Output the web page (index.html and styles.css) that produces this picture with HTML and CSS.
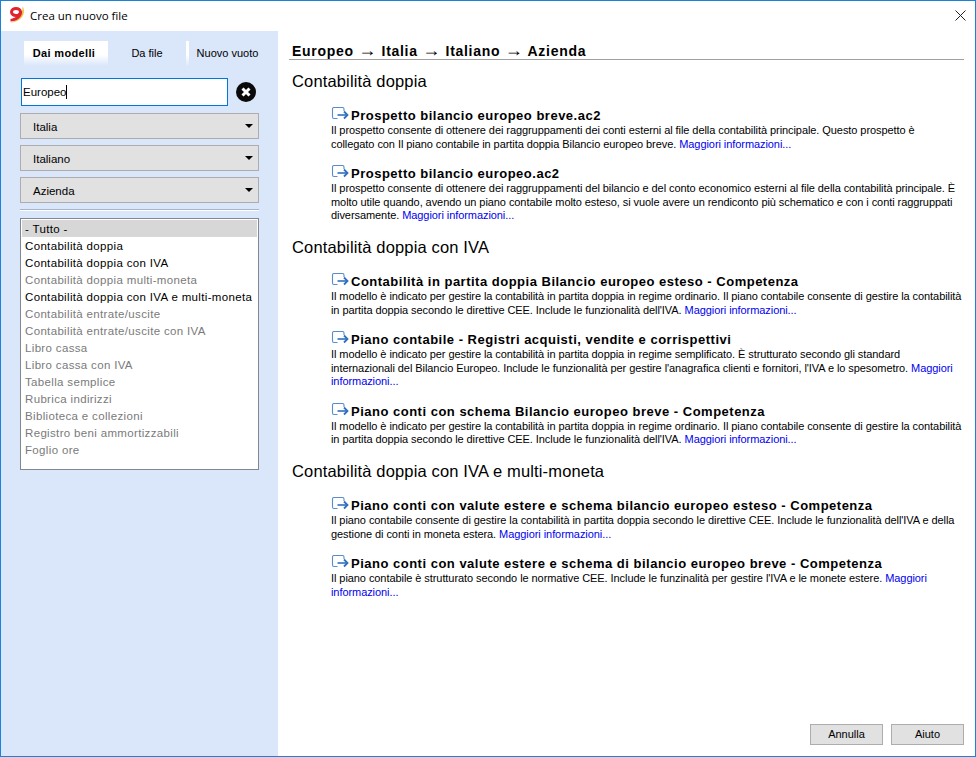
FILE: index.html
```html
<!DOCTYPE html>
<html lang="it">
<head>
    <meta charset="UTF-8">
    <title>Crea un nuovo file</title>
    <link rel="stylesheet" href="styles.css">
</head>
<body>
    <svg class="sprites" width="0" height="0">
        <symbol id="go" viewBox="0 0 19 15">
            <path d="M13 4V2a1.500 1.500 0 0 0-1.500-1.500H3A1.500 1.500 0 0 0 1.500 2v8A1.500 1.500 0 0 0 3 11.500h3.500" fill="none" stroke="#5a8cca" stroke-width="1.100"/>
            <path d="M6.500 8h9.500" fill="none" stroke="#2f6fbd" stroke-width="1.600"/>
            <path d="M13 4.500l3.500 3.500-3.500 3.500" fill="none" stroke="#2f6fbd" stroke-width="1.800"/>
        </symbol>
    </svg>
    <div class="window">
        <div class="titlebar">
            <svg class="logo" width="18" height="18" viewBox="0 0 18 18">
                <path d="M15.500 0c3.500 6 1 15-12.500 17 8-2.500 13-8 12.500-17z" fill="#e8c34a"/>
                <ellipse cx="9" cy="6" rx="4.500" ry="3.600" fill="none" stroke="#e0232e" stroke-width="3"/>
                <path d="M15 5c0.500 6-5 10.500-11.500 10.500v-2.500c3.500-0.500 7-2.500 8-6z" fill="#e0232e"/>
            </svg>
            <span class="title">Crea un nuovo file</span>
            <svg class="close" width="11" height="11" viewBox="0 0 11 11">
                <path d="M0.500 0.500l10 10M10.500 0.500l-10 10" stroke="#222" stroke-width="1" fill="none"/>
            </svg>
        </div>
        <div class="main">
            <div class="sidebar">
                <div class="tabs">
                    <div class="tab tab-active">Dai modelli</div>
                    <div class="tab tab-file">Da file</div>
                    <div class="tab tab-empty">Nuovo vuoto</div>
                </div>
                <div class="search-row">
                    <div class="search">Europeo<span class="caret"></span></div>
                    <svg class="clear" width="20" height="20" viewBox="0 0 20 20">
                        <circle cx="10" cy="10" r="10" fill="#0a0a0a"/>
                        <path d="M6.500 6.500l7 7M13.500 6.500l-7 7" stroke="#fff" stroke-width="3" fill="none"/>
                    </svg>
                </div>
                <div class="combo">Italia</div>
                <div class="combo">Italiano</div>
                <div class="combo">Azienda</div>
                <div class="divider"></div>
                <div class="list">
                    <div class="row row-selected">- Tutto -</div>
                    <div class="row">Contabilità doppia</div>
                    <div class="row">Contabilità doppia con IVA</div>
                    <div class="row row-off">Contabilità doppia multi-moneta</div>
                    <div class="row">Contabilità doppia con IVA e multi-moneta</div>
                    <div class="row row-off">Contabilità entrate/uscite</div>
                    <div class="row row-off">Contabilità entrate/uscite con IVA</div>
                    <div class="row row-off">Libro cassa</div>
                    <div class="row row-off">Libro cassa con IVA</div>
                    <div class="row row-off">Tabella semplice</div>
                    <div class="row row-off">Rubrica indirizzi</div>
                    <div class="row row-off">Biblioteca e collezioni</div>
                    <div class="row row-off">Registro beni ammortizzabili</div>
                    <div class="row row-off">Foglio ore</div>
                </div>
            </div>
            <div class="content">
                <div class="crumbs">Europeo <span class="arrow">→</span> Italia <span class="arrow">→</span> Italiano <span class="arrow">→</span> Azienda</div>

                <h2 class="group">Contabilità doppia</h2>
                <div class="item">
                    <h3 class="item-title"><svg class="go" width="19" height="15"><use href="#go"/></svg>Prospetto bilancio europeo breve.ac2</h3>
                    <p class="item-text">Il prospetto consente di ottenere dei raggruppamenti dei conti esterni al file della contabilità principale. Questo prospetto è<br>collegato con Il piano contabile in partita doppia Bilancio europeo breve. <a class="more">Maggiori informazioni...</a></p>
                </div>
                <div class="item">
                    <h3 class="item-title"><svg class="go" width="19" height="15"><use href="#go"/></svg>Prospetto bilancio europeo.ac2</h3>
                    <p class="item-text">Il prospetto consente di ottenere dei raggruppamenti del bilancio e del conto economico esterni al file della contabilità principale. È<br>molto utile quando, avendo un piano contabile molto esteso, si vuole avere un rendiconto più schematico e con i conti raggruppati<br>diversamente. <a class="more">Maggiori informazioni...</a></p>
                </div>

                <h2 class="group">Contabilità doppia con IVA</h2>
                <div class="item">
                    <h3 class="item-title"><svg class="go" width="19" height="15"><use href="#go"/></svg>Contabilità in partita doppia Bilancio europeo esteso - Competenza</h3>
                    <p class="item-text">Il modello è indicato per gestire la contabilità in partita doppia in regime ordinario. Il piano contabile consente di gestire la contabilità<br>in partita doppia secondo le direttive CEE. Include le funzionalità dell'IVA. <a class="more">Maggiori informazioni...</a></p>
                </div>
                <div class="item">
                    <h3 class="item-title"><svg class="go" width="19" height="15"><use href="#go"/></svg>Piano contabile - Registri acquisti, vendite e corrispettivi</h3>
                    <p class="item-text">Il modello è indicato per gestire la contabilità in partita doppia in regime semplificato. È strutturato secondo gli standard<br>internazionali del Bilancio Europeo. Include le funzionalità per gestire l'anagrafica clienti e fornitori, l'IVA e lo spesometro. <a class="more">Maggiori<br>informazioni...</a></p>
                </div>
                <div class="item">
                    <h3 class="item-title"><svg class="go" width="19" height="15"><use href="#go"/></svg>Piano conti con schema Bilancio europeo breve - Competenza</h3>
                    <p class="item-text">Il modello è indicato per gestire la contabilità in partita doppia in regime ordinario. Il piano contabile consente di gestire la contabilità<br>in partita doppia secondo le direttive CEE. Include le funzionalità dell'IVA. <a class="more">Maggiori informazioni...</a></p>
                </div>

                <h2 class="group">Contabilità doppia con IVA e multi-moneta</h2>
                <div class="item">
                    <h3 class="item-title"><svg class="go" width="19" height="15"><use href="#go"/></svg>Piano conti con valute estere e schema bilancio europeo esteso - Competenza</h3>
                    <p class="item-text">Il piano contabile consente di gestire la contabilità in partita doppia secondo le direttive CEE. Include le funzionalità dell'IVA e della<br>gestione di conti in moneta estera. <a class="more">Maggiori informazioni...</a></p>
                </div>
                <div class="item">
                    <h3 class="item-title"><svg class="go" width="19" height="15"><use href="#go"/></svg>Piano conti con valute estere e schema di bilancio europeo breve - Competenza</h3>
                    <p class="item-text">Il piano contabile è strutturato secondo le normative CEE. Include le funzinalità per gestire l'IVA e le monete estere. <a class="more">Maggiori<br>informazioni...</a></p>
                </div>

                <div class="buttons">
                    <div class="btn">Annulla</div>
                    <div class="btn">Aiuto</div>
                </div>
            </div>
        </div>
    </div>
</body>
</html>
```
FILE: styles.css
```css
html, body {
    height: 100%;
    margin: 0;
}

body {
    font-family: 'Liberation Sans', Arial, sans-serif;
    font-size: 12px;
    color: #000;
    background-color: #fff;
}

.sprites {
    display: block;
    height: 0;
}

.window {
    box-sizing: border-box;
    height: 757px;
    display: flex;
    flex-direction: column;
    border: 1px solid #1883d7;
    overflow: hidden;
}

.titlebar {
    box-sizing: border-box;
    height: 30px;
    flex: none;
    display: flex;
    align-items: center;
    padding: 0 9px 2px 6px;
    background-color: #fff;
}

.logo {
    margin-right: 5px;
}

.title {
    font-family: 'Open Sans', sans-serif;
    font-size: 11.500px;
    flex: 1;
}

.main {
    flex: 1;
    display: flex;
    min-height: 0;
}

.sidebar {
    width: 277px;
    flex: none;
    box-sizing: border-box;
    padding: 10px 19px 0 19px;
    background-color: #dae6f9;
}

.tabs {
    display: flex;
    height: 25px;
    padding-left: 4px;
    margin-bottom: 12px;
}

.tab {
    font-size: 11px;
    line-height: 25px;
    text-align: center;
}

.tab-active {
    box-sizing: border-box;
    width: 84px;
    padding-right: 4px;
    font-weight: bold;
    letter-spacing: 0.350px;
    background: linear-gradient(#fff 55%, #dae6f9);
}

.tab-file {
    width: 78px;
}

.tab-empty {
    flex: 1;
    padding-left: 7px;
    white-space: nowrap;
    border-left: 3px solid;
    border-image: linear-gradient(#fff 55%, #dae6f9) 1;
}

.search-row {
    display: flex;
    align-items: center;
    padding-left: 1px;
    margin-bottom: 7px;
}

.search {
    box-sizing: border-box;
    width: 207px;
    height: 28px;
    padding-left: 1px;
    line-height: 26px;
    font-size: 11.500px;
    background-color: #fff;
    border: 1px solid #0078d7;
}

.caret {
    display: inline-block;
    width: 1px;
    height: 14px;
    vertical-align: -3px;
    background-color: #000;
}

.clear {
    margin-left: 8px;
}

.combo {
    position: relative;
    box-sizing: border-box;
    height: 26px;
    margin-bottom: 6px;
    padding-left: 12px;
    line-height: 27px;
    font-size: 11.500px;
    background-color: #e1e1e1;
    border: 1px solid #adadad;
}

.combo::after {
    content: "";
    position: absolute;
    right: 5px;
    top: 10px;
    border-left: 4px solid transparent;
    border-right: 4px solid transparent;
    border-top: 4px solid #000;
}

.divider {
    height: 1px;
    margin-bottom: 7px;
    background-color: #a9b3c4;
    border-bottom: 1px solid #fff;
}

.list {
    box-sizing: border-box;
    height: 252px;
    padding: 1px;
    background-color: #fff;
    border: 1px solid #828790;
}

.row {
    height: 17px;
    padding-left: 3px;
    line-height: 18px;
    font-size: 11.500px;
    letter-spacing: 0.340px;
    white-space: nowrap;
}

.row-selected {
    background-color: #d7d7d7;
}

.row-off {
    color: #7a7a7a;
}

.content {
    flex: 1;
    position: relative;
    padding: 10px 11px 0 11px;
    min-width: 0;
}

.crumbs {
    height: 18px;
    padding-left: 3px;
    line-height: 20px;
    font-size: 14px;
    font-weight: bold;
    letter-spacing: 0.700px;
    white-space: nowrap;
    border-bottom: 1px solid #a0a0a0;
}

.arrow {
    font-size: 18px;
    font-weight: normal;
    line-height: 18px;
}

.group {
    margin: 0;
    padding: 13.500px 0 0 3px;
    height: 24px;
    line-height: 22px;
    font-size: 16.500px;
    font-weight: normal;
    letter-spacing: 0.150px;
}

.crumbs + .group {
    padding-top: 10px;
}

.item {
    padding-left: 42px;
    margin-top: 14px;
}

.group + .item {
    margin-top: 13px;
}

.item-title {
    position: relative;
    margin: 0;
    height: 17px;
    padding-left: 20px;
    line-height: 17px;
    font-size: 13px;
    font-weight: bold;
    letter-spacing: 0.500px;
    white-space: nowrap;
}

.go {
    position: absolute;
    left: 0;
    top: 0;
}

.item-text {
    margin: 0;
    font-size: 11px;
    line-height: 13.500px;
    letter-spacing: -0.070px;
    white-space: nowrap;
}

.more {
    color: #0000ee;
}

.buttons {
    position: absolute;
    right: 11px;
    bottom: 11px;
    display: flex;
    gap: 8px;
}

.btn {
    box-sizing: border-box;
    width: 73px;
    height: 21px;
    line-height: 19px;
    text-align: center;
    font-size: 11px;
    background-color: #e1e1e1;
    border: 1px solid #adadad;
}
```
